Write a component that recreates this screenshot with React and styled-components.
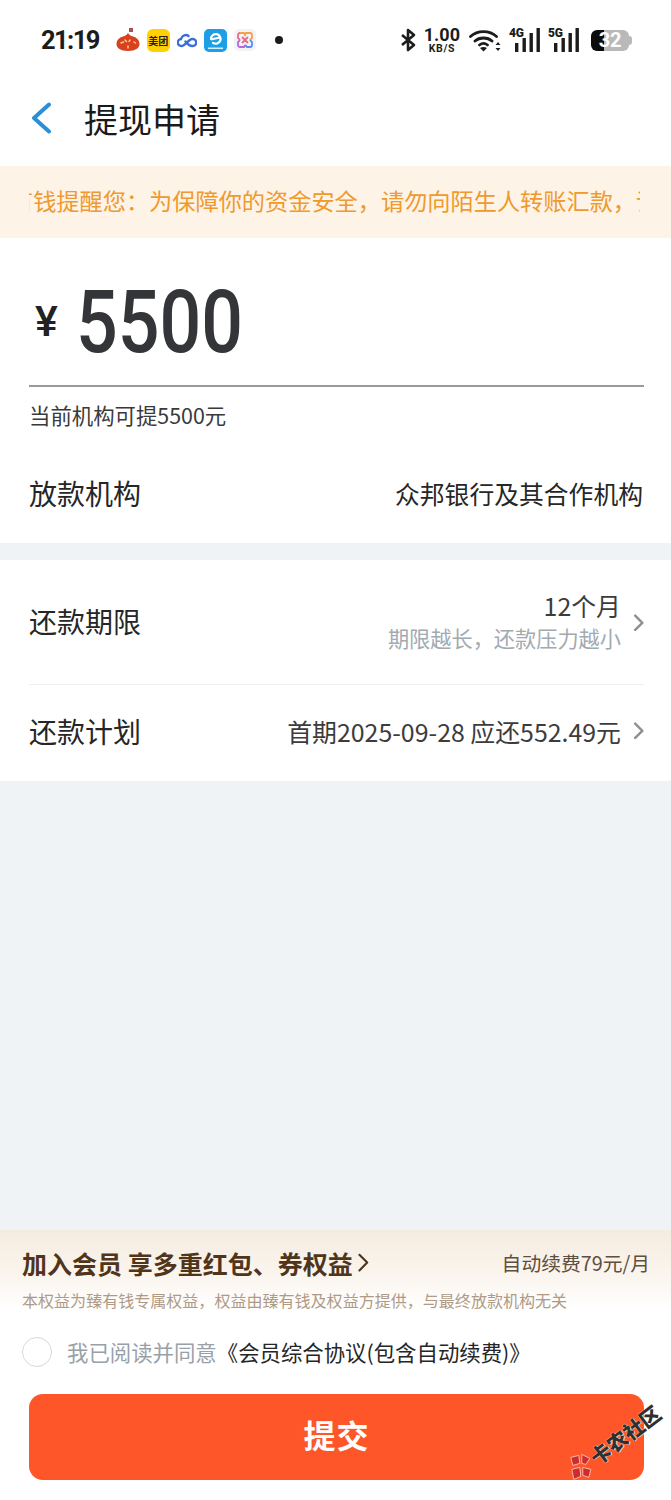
import React from 'react';
import styled, { createGlobalStyle } from 'styled-components';

const CJK = '"Noto Sans CJK SC", "Noto Sans", sans-serif';

const GlobalStyle = createGlobalStyle`
  html, body {
    margin: 0;
    padding: 0;
    background: #eff3f6;
    font-family: ${CJK};
  }
`;

const Page = styled.div`
  position: relative;
  width: 671px;
  height: 1500px;
  display: flex;
  flex-direction: column;
  background: #eff3f6;
  overflow: hidden;
`;

const StatusBar = styled.div`
  height: 80px;
  box-sizing: border-box;
  padding: 0 39px 0 41px;
  background: #fff;
  display: flex;
  align-items: center;
  justify-content: space-between;
`;

const StatusLeft = styled.div`
  display: flex;
  align-items: center;
`;

const Clock = styled.span`
  font-family: Roboto, sans-serif;
  font-weight: 700;
  font-size: 25.5px;
  letter-spacing: -1.6px;
  color: #1c1c1c;
  margin-right: 17px;
`;

const AppIcons = styled.div`
  display: flex;
  align-items: center;
  gap: 7px;
`;

const MeituanIcon = styled.div`
  width: 23px;
  height: 23px;
  border-radius: 6px;
  background: #ffd100;
  color: #222;
  font-size: 10px;
  font-weight: 700;
  line-height: 23px;
  text-align: center;
  white-space: nowrap;
`;

const ECloudIcon = styled.div`
  width: 23px;
  height: 23px;
  border-radius: 5px;
  background: #1d9fe6;
`;

const Dot = styled.span`
  width: 8px;
  height: 8px;
  border-radius: 50%;
  background: #1c1c1c;
  margin-left: 12px;
`;

const StatusRight = styled.div`
  display: flex;
  align-items: center;
`;

const Speed = styled.div`
  display: flex;
  flex-direction: column;
  align-items: center;
  margin: 0 9px 0 8px;
  font-family: Roboto, sans-serif;
  font-weight: 700;
  color: #1c1c1c;
`;

const SpeedValue = styled.span`
  font-size: 18px;
  line-height: 16px;
`;

const SpeedUnit = styled.span`
  font-size: 10.5px;
  line-height: 11px;
  letter-spacing: 0.6px;
`;

const Signal = styled.div`
  position: relative;
  width: 31px;
  height: 24px;
  margin-left: ${(p) => p.$gap}px;
`;

const SignalLabel = styled.span`
  position: absolute;
  left: 0;
  top: -1px;
  font-family: Roboto, sans-serif;
  font-size: 12px;
  line-height: 13px;
  font-weight: 900;
  letter-spacing: -0.3px;
  color: #1c1c1c;
`;

const Battery = styled.div`
  position: relative;
  width: 38px;
  height: 21px;
  margin-left: 12px;
  margin-right: 3px;
  border-radius: 6px;
  background: linear-gradient(90deg, #0c0c0c 0 34%, #b9b9b9 34% 100%);
  color: #fff;
  font-family: Roboto, sans-serif;
  font-weight: 700;
  font-size: 20px;
  line-height: 21px;
  text-align: center;
  letter-spacing: -0.2px;

  &::after {
    content: '';
    position: absolute;
    right: -3px;
    top: 6px;
    width: 3px;
    height: 9px;
    border-radius: 0 3px 3px 0;
    background: #b9b9b9;
  }
`;

const NavBar = styled.div`
  height: 86px;
  box-sizing: border-box;
  padding: 0 0 10px 30px;
  background: #fff;
  display: flex;
  align-items: center;
  gap: 32px;
`;

const Title = styled.h1`
  margin: 0;
  font-size: 34px;
  font-weight: 400;
  color: #1a1a1a;
`;

const Notice = styled.div`
  height: 72px;
  box-sizing: border-box;
  background: #fef3e7;
  padding: 0 31px 4px 29px;
  display: flex;
  align-items: center;
`;

const NoticeClip = styled.div`
  flex: 1;
  overflow: hidden;
  white-space: nowrap;
`;

const NoticeText = styled.span`
  display: inline-block;
  margin-left: -19px;
  font-size: 23.2px;
  color: #ee9a2e;
`;

const AmountCard = styled.section`
  background: #fff;
  height: 305px;
  box-sizing: border-box;
  padding: 0 27px 0 29px;
  display: flex;
  flex-direction: column;
`;

const AmountRow = styled.div`
  height: 149px;
  box-sizing: border-box;
  border-bottom: 2px solid #9a9a9a;
  display: flex;
  align-items: center;
  padding: 20px 0 0 6px;
`;

const Currency = styled.span`
  font-family: Roboto, sans-serif;
  font-size: 43px;
  font-weight: 500;
  color: #222;
  width: 41px;
  margin-top: -2px;
`;

const Amount = styled.span`
  font-family: Roboto, sans-serif;
  font-weight: 500;
  font-size: 87px;
  line-height: 100px;
  color: #333538;
  display: inline-block;
  transform: scaleX(0.845);
  transform-origin: left center;
`;

const Hint = styled.div`
  margin-top: 14px;
  font-size: 21.4px;
  line-height: 28px;
  color: #3a3a3a;
`;

const LenderRow = styled.div`
  margin: 44px 1px 0 0;
  display: flex;
  justify-content: space-between;
  align-items: center;
`;

const RowLabel = styled.span`
  font-size: 28px;
  color: #262626;
`;

const LenderName = styled.span`
  font-size: 24.8px;
  color: #262626;
`;

const Spacer = styled.div`
  height: 17px;
`;

const TermsCard = styled.section`
  background: #fff;
  height: 221px;
  box-sizing: border-box;
  padding: 0 27px 0 29px;
  display: flex;
  flex-direction: column;
`;

const TermRow = styled.div`
  height: ${(p) => p.$height}px;
  box-sizing: border-box;
  padding-bottom: ${(p) => (p.$divider ? 3 : 5)}px;
  display: flex;
  align-items: center;
  justify-content: space-between;
  border-bottom: ${(p) => (p.$divider ? '1px solid #edeff1' : 'none')};
`;

const TermValue = styled.div`
  display: flex;
  align-items: center;
  gap: 12px;
`;

const TermText = styled.div`
  display: flex;
  flex-direction: column;
  align-items: flex-end;
`;

const TermMain = styled.span`
  font-size: 24.9px;
  line-height: 34px;
  color: #3c3c3c;
`;

const TermSub = styled.span`
  font-size: 21.2px;
  line-height: 32px;
  color: #a2aab1;
`;

const Fill = styled.div`
  flex: 1;
`;

const Footer = styled.section`
  height: 270px;
  box-sizing: border-box;
  background: linear-gradient(180deg, #f5ecdf 0, #fbf6f0 50px, #fff 78px);
  display: flex;
  flex-direction: column;
`;

const MemberRow = styled.div`
  display: flex;
  align-items: center;
  justify-content: space-between;
  padding: 14px 21px 0 22px;
  height: 37px;
`;

const MemberTitle = styled.div`
  display: flex;
  align-items: center;
  gap: 4px;
  font-size: 25px;
  font-weight: 700;
  color: #50351a;
  white-space: nowrap;
`;

const MemberFee = styled.span`
  font-size: 19.8px;
  color: #5f4f3e;
`;

const MemberNote = styled.div`
  margin: 7px 0 0 22px;
  font-size: 16.05px;
  line-height: 24px;
  color: #ae9a85;
`;

const AgreeRow = styled.div`
  margin: 24px 0 0 22px;
  display: flex;
  align-items: center;
  gap: 15px;
  font-size: 21.4px;
  line-height: 32px;
`;

const Radio = styled.span`
  width: 28px;
  height: 28px;
  border: 1.5px solid #d6d8da;
  border-radius: 50%;
`;

const AgreeText = styled.span`
  color: #98a1a9;
`;

const AgreeLink = styled.span`
  color: #262626;
`;

const SubmitButton = styled.button`
  margin: 26px 27px 0 29px;
  height: 86px;
  padding: 0 0 6px;
  border: none;
  border-radius: 14px;
  background: #fe5628;
  color: #fff;
  font-family: ${CJK};
  font-size: 32px;
  font-weight: 700;
  letter-spacing: 1px;
`;

const Watermark = styled.div`
  position: absolute;
  left: 568px;
  top: 1454px;
  display: flex;
  align-items: center;
  gap: 1px;
  transform: rotate(-37deg);
  transform-origin: 12px 14px;
`;

const WatermarkText = styled.span`
  font-size: 20.5px;
  font-weight: 900;
  line-height: 22px;
  color: #30302f;
  white-space: nowrap;
  text-shadow: 0 0 1px #fff, 1px 1px 0 rgba(255, 255, 255, 0.6);
`;

const ChevronIcon = styled.svg`
  flex: none;
  margin-top: ${(p) => p.$shift || 0}px;
`;

const Chevron = ({ size = 11, color = '#8c9196', w = 2.2, shift = 0 }) => (
  <ChevronIcon $shift={shift} width={size} height={size * 1.6} viewBox="0 0 10 16" fill="none">
    <path d="M2 1.5 8.5 8 2 14.5" stroke={color} strokeWidth={w} strokeLinecap="round" strokeLinejoin="round" />
  </ChevronIcon>
);

const BackArrow = () => (
  <svg width="22" height="32" viewBox="0 0 22 32" fill="none">
    <path d="M19 2.5 4 16l15 13.5" stroke="#2a8fd6" strokeWidth="4" strokeLinecap="round" strokeLinejoin="round" />
  </svg>
);

const TomatoIcon = () => (
  <svg width="24" height="24" viewBox="0 0 24 24">
    <rect x="13" y="0" width="4" height="4" fill="#a5554c" />
    <path d="M12 5c1 2 3 3 5 3.500 4 1 6.500 4 6.500 7.500 0 4-4 7-11.500 7S.5 20 .5 16c0-3.500 2.500-6.500 6.500-7.500C9 8 11 7 12 5Z" fill="#d9401f" />
    <path d="M5 15l2.500-1M9 12l1.500 1.500M14 12l-1 1.500M18 14l1.500 1M12 18v2" stroke="#ffc98a" strokeWidth="1.500" strokeLinecap="round" />
  </svg>
);

const CloudIcon = () => (
  <svg width="20" height="16" viewBox="0 0 20 16" fill="none">
    <path d="M4.500 14a3.500 3.500 0 0 1-.5-7C5 3.500 9 2 11.500 4M15.500 14a3.500 3.500 0 0 0 .5-7M4.500 14C8 14 12 7 15 7M15.500 14C12 14 10 11.500 8.500 9.500" stroke="#3b6fd8" strokeWidth="2.400" strokeLinecap="round" />
  </svg>
);

const ELogo = () => (
  <ECloudIcon>
    <svg width="23" height="23" viewBox="0 0 23 23" fill="none">
      <path d="M7 10a4.800 4.800 0 1 1 2 3.800M8 10.300l8-1.800" stroke="#fff" strokeWidth="2.200" strokeLinecap="round" />
      <rect x="4" y="18.500" width="15" height="1.500" fill="#cfeeff" />
    </svg>
  </ECloudIcon>
);

const RainbowIcon = () => (
  <svg width="22" height="22" viewBox="0 0 22 22" fill="none">
    <rect width="22" height="22" rx="5" fill="#f3f3f6" />
    <path d="M6 4h4l1 2 1-2h4a2 2 0 0 1 2 2v3l-2 2" stroke="#f1a14a" strokeWidth="1.800" />
    <path d="M16 11l2 2v3a2 2 0 0 1-2 2h-3l-2-2" stroke="#5a8cf0" strokeWidth="1.800" />
    <path d="M11 16l-1 2H6a2 2 0 0 1-2-2v-3l2-2" stroke="#b06ae0" strokeWidth="1.800" />
    <path d="M6 11 4 9V6a2 2 0 0 1 2-2M8 8l6 6M14 8l-6 6" stroke="#ea6a88" strokeWidth="1.800" />
  </svg>
);

const Bluetooth = () => (
  <svg width="16" height="24" viewBox="0 0 16 24" fill="none">
    <path d="M2 7l12 10-6 5V2l6 5L2 17" stroke="#1c1c1c" strokeWidth="2.600" strokeLinejoin="round" />
  </svg>
);

const Wifi = () => (
  <svg width="32" height="24" viewBox="0 0 32 24" fill="none">
    <path d="M1.500 8.500C8.500 2 20.500 2 27.500 8.500M6 13c4.500-4 12.500-4 17 0M10.500 17c2.500-2 5.500-2 8 0" stroke="#1c1c1c" strokeWidth="2.800" strokeLinecap="round" />
    <path d="M14.500 23.500 11 20c2-1.500 5-1.500 7 0Z" fill="#1c1c1c" />
    <path d="M29 14l2.500 3h-5ZM29 23l2.500-3h-5Z" fill="#1c1c1c" />
  </svg>
);

const SignalBars = () => (
  <svg width="31" height="24" viewBox="0 0 31 24" style={{ position: 'absolute', left: 0, top: 0 }}>
    <rect x="6" y="15" width="3.400" height="9" fill="#1c1c1c" />
    <rect x="13.500" y="10" width="3.400" height="14" fill="#1c1c1c" />
    <rect x="20.500" y="5" width="3.400" height="19" fill="#1c1c1c" />
    <rect x="27.500" y="0" width="3.400" height="24" fill="#1c1c1c" />
  </svg>
);

const WatermarkLogo = () => (
  <svg width="26" height="28" viewBox="0 0 24 28" style={{ transform: 'rotate(37deg)' }}>
    <path d="M2 4l8-2 1 8-7 2ZM13 1l8 4-4 6-4-1ZM3 16l8-2 1 9-7 3ZM14 14l8 2-2 8-6-2Z" fill="#cf2a2c" stroke="#f7d8cf" strokeWidth="0.800" />
  </svg>
);

const App = () => (
  <Page>
    <GlobalStyle />
    <StatusBar>
      <StatusLeft>
        <Clock>21:19</Clock>
        <AppIcons>
          <TomatoIcon />
          <MeituanIcon>美团</MeituanIcon>
          <CloudIcon />
          <ELogo />
          <RainbowIcon />
          <Dot />
        </AppIcons>
      </StatusLeft>
      <StatusRight>
        <Bluetooth />
        <Speed>
          <SpeedValue>1.00</SpeedValue>
          <SpeedUnit>KB/S</SpeedUnit>
        </Speed>
        <Wifi />
        <Signal $gap={8}>
          <SignalBars />
          <SignalLabel>4G</SignalLabel>
        </Signal>
        <Signal $gap={8}>
          <SignalBars />
          <SignalLabel>5G</SignalLabel>
        </Signal>
        <Battery>32</Battery>
      </StatusRight>
    </StatusBar>

    <NavBar>
      <BackArrow />
      <Title>提现申请</Title>
    </NavBar>

    <Notice>
      <NoticeClip>
        <NoticeText>有钱提醒您：为保障你的资金安全，请勿向陌生人转账汇款，请</NoticeText>
      </NoticeClip>
    </Notice>

    <AmountCard>
      <AmountRow>
        <Currency>¥</Currency>
        <Amount>5500</Amount>
      </AmountRow>
      <Hint>当前机构可提5500元</Hint>
      <LenderRow>
        <RowLabel>放款机构</RowLabel>
        <LenderName>众邦银行及其合作机构</LenderName>
      </LenderRow>
    </AmountCard>

    <Spacer />

    <TermsCard>
      <TermRow $height={125} $divider>
        <RowLabel>还款期限</RowLabel>
        <TermValue>
          <TermText>
            <TermMain>12个月</TermMain>
            <TermSub>期限越长，还款压力越小</TermSub>
          </TermText>
          <Chevron shift={4} />
        </TermValue>
      </TermRow>
      <TermRow $height={96}>
        <RowLabel>还款计划</RowLabel>
        <TermValue>
          <TermMain>首期2025-09-28 应还552.49元</TermMain>
          <Chevron />
        </TermValue>
      </TermRow>
    </TermsCard>

    <Fill />

    <Footer>
      <MemberRow>
        <MemberTitle>
          加入会员 享多重红包、券权益
          <Chevron size={12} color="#50351a" w={1.8} />
        </MemberTitle>
        <MemberFee>自动续费79元/月</MemberFee>
      </MemberRow>
      <MemberNote>本权益为臻有钱专属权益，权益由臻有钱及权益方提供，与最终放款机构无关</MemberNote>
      <AgreeRow>
        <Radio />
        <span>
          <AgreeText>我已阅读并同意</AgreeText>
          <AgreeLink>《会员综合协议(包含自动续费)》</AgreeLink>
        </span>
      </AgreeRow>
      <SubmitButton>提交</SubmitButton>
    </Footer>

    <Watermark>
      <WatermarkLogo />
      <WatermarkText>卡农社区</WatermarkText>
    </Watermark>
  </Page>
);

export default App;
